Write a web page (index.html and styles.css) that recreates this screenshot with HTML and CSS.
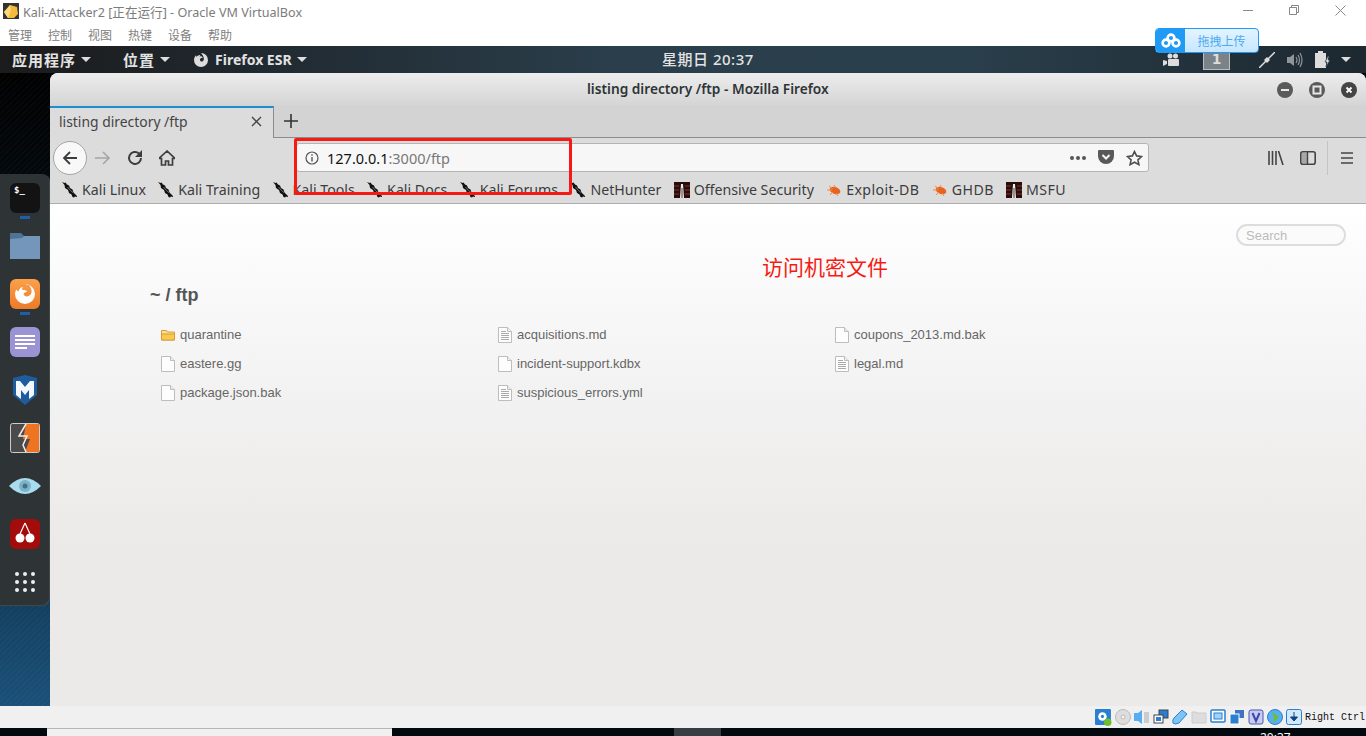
FILE: index.html
```html
<!DOCTYPE html>
<html lang="en">
<head>
  <meta charset="utf-8">
  <title>Kali-Attacker2 - Oracle VM VirtualBox</title>
  <link rel="stylesheet" href="styles.css">
</head>
<body>
<svg class="defs" width="0" height="0">
  <symbol id="dragon" viewBox="0 0 16 16">
    <path d="M0 0l2.500 1 1-.5 1.500 2 2 1 1 2.500 2.500 1.500 1 3 3.500 3.500v1l-2-.5-1 1-1.500-.5-1-2.500-2.500-1.500-1-3-3-2-.5-3z" fill="#111"/>
    <path d="M5.500 5l3 3.500 2.500 2" stroke="#8a8a8a" stroke-width=".8" fill="none"/>
  </symbol>
  <symbol id="offsec" viewBox="0 0 16 16">
    <rect width="16" height="16" fill="#2a0d0a"/>
    <path d="M0 4h5M0 8h5M0 12h5M11 4h5M11 8h5M11 12h5" stroke="#7a3a2a"/>
    <path d="M7 2h2l1 14H6z" fill="#eee"/>
    <path d="M7.600 6h.8v10h-.8z" fill="#2a0d0a"/>
  </symbol>
  <symbol id="bug" viewBox="0 0 16 16">
    <ellipse cx="9" cy="8.500" rx="5.500" ry="3.400" fill="#e8641e" transform="rotate(20 9 8.500)"/>
    <path d="M1 8h5M3 4l4 3M4 13l3-3M8 3l2 3M12 14l-2-3" stroke="#f08a4a" stroke-width="1" fill="none"/>
  </symbol>
  <symbol id="file" viewBox="0 0 14 16">
    <path d="M.5.5h9l4 4v11H.5z" fill="#fdfdfd" stroke="#bdbdbd"/>
    <path d="M9.500.5v4h4" fill="#eee" stroke="#bdbdbd"/>
  </symbol>
  <symbol id="textfile" viewBox="0 0 14 16">
    <path d="M.5.5h9l4 4v11H.5z" fill="#fdfdfd" stroke="#bdbdbd"/>
    <path d="M9.500.5v4h4" fill="#eee" stroke="#bdbdbd"/>
    <path d="M3 4.500h5M3 6.500h8M3 8.500h8M3 10.500h8M3 12.500h8" stroke="#aaa"/>
  </symbol>
</svg>

<div class="vbox">
  <header class="vbox-title">
    <svg class="vbox-logo" width="16" height="16" viewBox="0 0 16 16">
      <rect width="16" height="16" fill="#333"/>
      <path d="M1 9l6-7 7 2 1 7-4 4H5z" fill="#f5b93c"/>
      <path d="M1 9l6-7 1 6-3 7z" fill="#fbd777"/>
    </svg>
    <span class="vbox-title-text">Kali-Attacker2 [正在运行] - Oracle VM VirtualBox</span>
    <div class="win-buttons">
      <svg width="10" height="10" viewBox="0 0 10 10"><path d="M0 5.500h10" stroke="#888"/></svg>
      <svg width="10" height="10" viewBox="0 0 10 10"><path d="M.5 2.500h7v7h-7zM2.500 2.500v-2h7v7h-2" stroke="#888" fill="none"/></svg>
      <svg width="11" height="11" viewBox="0 0 11 11"><path d="M.5.5l10 10M10.500.5l-10 10" stroke="#888" fill="none"/></svg>
    </div>
  </header>
  <nav class="vbox-menu">
    <span>管理</span><span>控制</span><span>视图</span><span>热键</span><span>设备</span><span>帮助</span>
  </nav>

  <main class="guest">
    <div class="panel">
      <div class="panel-left">
        <span class="panel-item cjk">应用程序<i class="caret"></i></span>
        <span class="panel-item cjk">位置<i class="caret"></i></span>
        <span class="panel-item panel-ff">
          <svg width="16" height="16" viewBox="0 0 16 16"><path d="M8 1a7 7 0 1 1-7 7c0-2 .8-3.500 2-4.800L3.500 5C4.500 3.500 6 3 7.500 3L6 4.500c2-.5 3.500 0 4 1.500-1.500-.5-3 .5-3 2s2 2 3 1c1-1 1-2.500 .5-4C10 3 8 1.500 8 1z" fill="#ddd"/></svg>
          Firefox ESR<i class="caret"></i>
        </span>
      </div>
      <div class="panel-clock">星期日 20:37</div>
      <div class="panel-right">
        <svg class="tray-camera" width="16" height="14" viewBox="0 0 16 14"><circle cx="7" cy="3" r="2.500" fill="#ddd"/><circle cx="12.500" cy="3" r="2.500" fill="#ddd"/><rect x="5" y="6" width="11" height="7" rx="1" fill="#ddd"/><path d="M0 7l4 1v3l-4 2z" fill="#ddd"/></svg>
        <span class="workspace">1</span>
        <svg class="tray-plug" width="16" height="16" viewBox="0 0 16 16"><path d="M16 0L9 7M7 9l-7 7" stroke="#ddd" stroke-width="1.500"/><path d="M5 8l3-3 3 3-3 3z" fill="#ddd"/></svg>
        <svg class="tray-vol" width="16" height="16" viewBox="0 0 16 16"><path d="M0 5h3l4-3v12l-4-3H0z" fill="#8f9599"/><path d="M9 5q2 3 0 6M11 3q3 5 0 10M13 1q4 7 0 14" stroke="#8f9599" stroke-width="1.200" fill="none"/></svg>
        <svg class="tray-batt" width="16" height="17" viewBox="0 0 16 17"><path d="M3 0h5v2h3v15H0V2h3z" fill="#ddd"/><path d="M13 5l-3 6h2l-1 5 4-7h-2l1-4z" fill="#ddd" stroke="#24343f" stroke-width=".7"/></svg>
        <i class="caret tray-caret"></i>
      </div>
    </div>

    <div class="desktop"></div>

    <aside class="dock">
      <div class="dock-item">
        <div class="app-terminal">$_</div>
        <i class="running"></i>
      </div>
      <div class="dock-item">
        <svg width="30" height="26" viewBox="0 0 30 26"><path d="M0 0h11l3 3h16v23H0z" fill="#4e7397"/><path d="M0 6l12-1 2-2h16v23H0z" fill="#7496ba"/></svg>
      </div>
      <div class="dock-item">
        <div class="app-firefox">
          <svg width="26" height="26" viewBox="0 0 26 26"><path d="M13 3a10 10 0 1 1-10 10c0-2 .7-3.500 1.500-4.500.5 1 1 1.500 2 2C7 8 9 6 11 6c-1 1-1 2-.5 3 2 0 4 0 4.500 2-2 0-4 1-3 3 1 2 5 2 7-1 1.500-3 0-7-3-10z" fill="#fff"/></svg>
        </div>
        <i class="running"></i>
      </div>
      <div class="dock-item">
        <div class="app-notes"><i></i><i></i><i></i><i class="short"></i></div>
      </div>
      <div class="dock-item">
        <svg width="24" height="30" viewBox="0 0 24 30"><path d="M0 3l12-3 12 3v17l-12 10-12-10z" fill="#1d5c9f"/><path d="M3 20V6h4l5 6 5-6h4v14l-5 4v-9l-4 5-4-5v9z" fill="#f4f8fc"/></svg>
      </div>
      <div class="dock-item">
        <svg width="30" height="30" viewBox="0 0 30 30"><rect x=".5" y=".5" width="29" height="29" rx="2" fill="#4a4a4a" stroke="#ccc"/><path d="M16 1h13v28H15l5-13h-7z" fill="#ef7422"/><path d="M16 1l-7 12h8l-4 9 3 7" fill="none" stroke="#eee" stroke-width="1.500"/></svg>
      </div>
      <div class="dock-item">
        <svg width="32" height="16" viewBox="0 0 32 16"><path d="M0 8q16-16 32 0-16 16-32 0z" fill="#a9dcee"/><circle cx="16" cy="8" r="6" fill="#7db3c9"/><circle cx="16" cy="8" r="2.500" fill="#4c6f82"/></svg>
      </div>
      <div class="dock-item">
        <div class="app-cherry">
          <svg width="24" height="24" viewBox="0 0 24 24"><path d="M12 1L7 12M12 1l5 11" stroke="#fff" stroke-width="1.200" fill="none"/><circle cx="7" cy="16" r="4.500" fill="#fff"/><circle cx="17" cy="16" r="4.500" fill="#fff"/></svg>
        </div>
      </div>
      <div class="dock-item">
        <div class="app-grid"><i></i><i></i><i></i><i></i><i></i><i></i><i></i><i></i><i></i></div>
      </div>
    </aside>

    <section class="firefox">
      <div class="ff-title">
        <span class="ff-title-text">listing directory /ftp - Mozilla Firefox</span>
        <div class="ff-buttons">
          <span class="ff-btn"><svg width="16" height="16" viewBox="0 0 16 16"><circle cx="8" cy="8" r="8" fill="#5a5a5a"/><path d="M4 8h8" stroke="#e8e8e8" stroke-width="2"/></svg></span>
          <span class="ff-btn"><svg width="16" height="16" viewBox="0 0 16 16"><circle cx="8" cy="8" r="8" fill="#5a5a5a"/><rect x="4.500" y="4.500" width="7" height="7" fill="none" stroke="#e8e8e8" stroke-width="2"/></svg></span>
          <span class="ff-btn"><svg width="16" height="16" viewBox="0 0 16 16"><circle cx="8" cy="8" r="8" fill="#444"/><path d="M5.500 5.500l5 5M10.500 5.500l-5 5" stroke="#fff" stroke-width="1.800"/></svg></span>
        </div>
      </div>
      <div class="ff-tabs">
        <div class="tab">
          <span>listing directory /ftp</span>
          <svg width="11" height="11" viewBox="0 0 11 11"><path d="M1 1l9 9M10 1l-9 9" stroke="#444" stroke-width="1.400"/></svg>
        </div>
        <svg class="newtab" width="14" height="14" viewBox="0 0 14 14"><path d="M7 0v14M0 7h14" stroke="#333" stroke-width="1.600"/></svg>
      </div>
      <div class="ff-toolbar">
        <div class="nav-buttons">
          <span class="back"><svg width="16" height="16" viewBox="0 0 16 16"><path d="M15 8H2M8 2L2 8l6 6" stroke="#3d3d3d" stroke-width="1.800" fill="none"/></svg></span>
          <svg class="forward" width="16" height="16" viewBox="0 0 16 16"><path d="M0 8h14M8 2l6 6-6 6" stroke="#a4a4a4" stroke-width="1.500" fill="none"/></svg>
          <svg class="reload" width="16" height="16" viewBox="0 0 16 16"><path d="M14 8a6 6 0 1 1-2-4.500" stroke="#3d3d3d" stroke-width="2" fill="none"/><path d="M15 0v7H8z" fill="#3d3d3d"/></svg>
          <svg class="home" width="16" height="16" viewBox="0 0 16 16"><path d="M8 1L0 8.500h2.500V15h4v-4h3v4h4V8.500H16z" fill="none" stroke="#3d3d3d" stroke-width="1.700"/></svg>
        </div>
        <div class="urlbar">
          <svg width="14" height="14" viewBox="0 0 14 14"><circle cx="7" cy="7" r="6" fill="none" stroke="#555" stroke-width="1.200"/><path d="M7 6v4.500M7 3.200v1.500" stroke="#555" stroke-width="1.400"/></svg>
          <span class="url"><b>127.0.0.1</b>:3000/ftp</span>
          <span class="url-dots"><i></i><i></i><i></i></span>
          <svg width="16" height="15" viewBox="0 0 16 15"><path d="M1 0h14a1 1 0 0 1 1 1v5a8 8 0 0 1-16 0V1a1 1 0 0 1 1-1z" fill="#595959"/><path d="M4.500 5L8 8.500 11.500 5" stroke="#f6f6f6" stroke-width="2" fill="none"/></svg>
          <svg width="17" height="16" viewBox="0 0 17 16"><path d="M8.500 1.500l2.100 4.400 4.900.6-3.600 3.300 1 4.800-4.400-2.400-4.400 2.400 1-4.800-3.600-3.300 4.900-.6z" fill="none" stroke="#4f4f4f" stroke-width="1.600"/></svg>
        </div>
        <div class="ff-tools">
          <svg width="16" height="14" viewBox="0 0 16 14"><path d="M1 0v14M4.500 0v14M8 0v14M10.500 0l4.500 14" stroke="#444" stroke-width="1.600"/></svg>
          <svg width="16" height="14" viewBox="0 0 16 14"><rect x=".8" y=".8" width="14.400" height="12.400" rx="2" fill="none" stroke="#444" stroke-width="1.600"/><path d="M2 2h5v10H2z" fill="#444" opacity=".35"/><path d="M7.500 1v12" stroke="#444" stroke-width="1.400"/></svg>
          <i class="tools-sep"></i>
          <svg width="12" height="12" viewBox="0 0 12 12"><path d="M0 1h12M0 6h12M0 11h12" stroke="#444" stroke-width="1.700"/></svg>
        </div>
      </div>
      <div class="ff-bookmarks">
        <span class="bm"><svg><use href="#dragon"/></svg>Kali Linux</span>
        <span class="bm"><svg><use href="#dragon"/></svg>Kali Training</span>
        <span class="bm"><svg><use href="#dragon"/></svg>Kali Tools</span>
        <span class="bm"><svg><use href="#dragon"/></svg>Kali Docs</span>
        <span class="bm"><svg><use href="#dragon"/></svg>Kali Forums</span>
        <span class="bm"><svg><use href="#dragon"/></svg>NetHunter</span>
        <span class="bm"><svg><use href="#offsec"/></svg>Offensive Security</span>
        <span class="bm bm-caps"><svg><use href="#bug"/></svg>Exploit-DB</span>
        <span class="bm bm-caps"><svg><use href="#bug"/></svg>GHDB</span>
        <span class="bm bm-caps"><svg><use href="#offsec"/></svg>MSFU</span>
      </div>
      <div class="page">
        <div class="search-row"><input class="search" type="text" placeholder="Search"></div>
        <h1 class="crumbs">~ / ftp</h1>
        <ul class="listing">
          <li>
            <svg class="ico" viewBox="0 0 14 16"><path d="M.5 3.500h5l1 1.500h7v8H.5z" fill="#fbe08a" stroke="#d89a3a"/><path d="M.5 7h13v6H.5z" fill="#f9c94e" stroke="#d89a3a"/></svg>
            quarantine
          </li>
          <li><svg class="ico"><use href="#textfile"/></svg>acquisitions.md</li>
          <li><svg class="ico"><use href="#file"/></svg>coupons_2013.md.bak</li>
          <li><svg class="ico"><use href="#file"/></svg>eastere.gg</li>
          <li><svg class="ico"><use href="#file"/></svg>incident-support.kdbx</li>
          <li><svg class="ico"><use href="#textfile"/></svg>legal.md</li>
          <li><svg class="ico"><use href="#file"/></svg>package.json.bak</li>
          <li><svg class="ico"><use href="#textfile"/></svg>suspicious_errors.yml</li>
        </ul>
      </div>
    </section>

    <!-- annotations drawn on top of the screenshot -->
    <div class="mark-box"></div>
    <div class="mark-note">访问机密文件</div>
  </main>

  <footer class="vbox-status">
    <svg width="17" height="17" viewBox="0 0 16 16"><rect width="15" height="15" rx="1" fill="#2a7fd0"/><circle cx="7" cy="7" r="4" fill="#fff"/><circle cx="7" cy="7" r="1.500" fill="#2a7fd0"/><circle cx="12" cy="12.500" r="3.500" fill="#6cc02c"/></svg>
    <svg width="16" height="16" viewBox="0 0 16 16"><circle cx="8" cy="8" r="7.500" fill="#ddd" stroke="#bbb"/><circle cx="8" cy="8" r="2" fill="#f4f4f4" stroke="#bbb"/></svg>
    <svg width="16" height="16" viewBox="0 0 16 16"><path d="M0 4h4l4-3v14l-4-3H0z" fill="#58aef0"/><path d="M10 3h5v11h-5z" fill="#ccc"/></svg>
    <svg width="16" height="16" viewBox="0 0 16 16"><rect x="6" y="1" width="9" height="8" fill="#2a7fd0" stroke="#444"/><rect x="1" y="6" width="9" height="8" fill="#fff" stroke="#444"/><rect x="3" y="8" width="5" height="4" fill="#2a7fd0"/></svg>
    <svg width="16" height="16" viewBox="0 0 16 16"><path d="M10 1l5 4-8 9q-4 2-6 0-1-3 1-5z" fill="#7cc4f4" stroke="#2a7fd0"/></svg>
    <svg width="16" height="16" viewBox="0 0 16 16"><path d="M1 3h4l1 1h9v10H1z" fill="#ddd" stroke="#ccc"/></svg>
    <svg width="16" height="16" viewBox="0 0 16 16"><rect x="1" y="1" width="14" height="12" rx="1" fill="#fff" stroke="#2a7fd0" stroke-width="1.500"/><rect x="4" y="4" width="8" height="6" fill="#9fd4f8" stroke="#2a7fd0"/></svg>
    <svg width="16" height="16" viewBox="0 0 16 16"><rect x="6" y="1" width="9" height="8" fill="#3d74c4"/><rect x="1" y="5" width="9" height="10" fill="#2a7fd0" stroke="#fff"/></svg>
    <svg width="16" height="16" viewBox="0 0 16 16"><rect x="1" y="1" width="14" height="14" rx="2" fill="#c8cdf0" stroke="#4a55b0"/><path d="M4.500 4L8 12l3.500-8" fill="none" stroke="#3a46a8" stroke-width="2"/></svg>
    <svg width="16" height="16" viewBox="0 0 16 16"><circle cx="8" cy="8" r="7.500" fill="#58aef0" stroke="#2a7fd0"/><path d="M5 3l7 5-6 6 1-5z" fill="#6cc02c"/></svg>
    <svg width="16" height="16" viewBox="0 0 16 16"><rect x=".5" y=".5" width="15" height="15" rx="2" fill="#cfe8fb" stroke="#2a7fd0"/><path d="M8 3v6M4.500 8L8 12l3.500-4z" stroke="#123f86" fill="#123f86"/></svg>
    <span class="host-key">Right Ctrl</span>
  </footer>
  <div class="host-taskbar">
    <div class="task-window"></div>
    <div class="task-gray"></div>
    <span class="task-clock">20:37</span>
  </div>
</div>

<div class="upload">
  <span class="upload-icon">
    <svg width="20" height="15" viewBox="0 0 20 15"><g fill="none" stroke="#fff" stroke-width="2.600"><circle cx="10" cy="5" r="3.400"/><circle cx="5" cy="10" r="3.400"/><circle cx="15" cy="10" r="3.400"/></g></svg>
  </span>
  <span class="upload-text">拖拽上传</span>
</div>
</body>
</html>
```

FILE: styles.css
```css
html, body { margin: 0; padding: 0; }
body { width: 1366px; height: 736px; overflow: hidden; position: relative; background: #fff; font-family: "Noto Sans", "Noto Sans CJK SC", sans-serif; }
ul { margin: 0; padding: 0; list-style: none; }
.defs { position: absolute; }

.vbox { width: 1366px; height: 736px; display: flex; flex-direction: column; }

/* host window chrome */
.vbox-title { height: 22px; display: flex; align-items: center; padding-left: 3px; }
.vbox-logo { margin-right: 4px; }
.vbox-title-text { font-size: 12.600px; color: #7c7c7c; }
.win-buttons { margin-left: auto; display: flex; align-items: center; gap: 36px; padding: 0 20px 2px 0; height: 20px; }
.vbox-menu { height: 24px; display: flex; align-items: center; gap: 16px; padding-left: 8px; font-size: 12px; color: #808080; font-family: "Noto Sans CJK SC", sans-serif; }
.vbox-menu span { width: 24px; }

.guest { height: 660px; position: relative; display: flex; flex-direction: column; overflow: hidden; }

/* gnome top bar */
.panel { height: 27px; display: flex; align-items: center; position: relative; color: #e3e3e3; font-weight: 700; font-size: 14px; background: linear-gradient(90deg, #1b1b1b 0, #1f262c 15%, #2a3e4b 45%, #2a3f4c 70%, #1d2830 100%); }
.panel-left { display: flex; align-items: center; gap: 32px; padding-left: 12px; }
.panel-item { display: flex; align-items: center; gap: 5px; white-space: nowrap; }
.panel-item.cjk { font-size: 15px; letter-spacing: 1px; }
.panel-ff { margin-left: -9px; }
.panel-ff svg { margin-right: 1px; }
.caret { display: inline-block; width: 0; height: 0; border: 5px solid transparent; border-top: 5px solid #ddd; border-bottom: 0; }
.panel-clock { position: absolute; left: 662px; top: 3px; line-height: 20px; white-space: nowrap; font-weight: 500; font-size: 15px; letter-spacing: .5px; }
.panel-right { margin-left: auto; display: flex; align-items: center; padding-right: 15px; }
.workspace { width: 27px; height: 21px; box-sizing: border-box; margin: 0 29px 0 24px; background: #7b8288; border: 1px solid #b9bec2; color: #ddd; text-align: center; line-height: 19px; font-size: 14px; font-family: "DejaVu Sans", sans-serif; }
.tray-vol { margin-left: 12px; }
.tray-batt { margin-left: 12px; }
.tray-caret { margin-left: 10px; }

.desktop { flex: 1; background: repeating-linear-gradient(135deg, rgba(255,255,255,.02) 0 2px, transparent 2px 4px), linear-gradient(180deg, #000 0, #02080c 16%, #0d2c42 70%, #144466 88%, #1a5078 100%); }

.dock { position: absolute; left: 0; top: 128px; width: 50px; height: 432px; background: #2e3436; box-shadow: inset -1px -1px 0 #41474a; border-radius: 0 8px 8px 0; display: flex; flex-direction: column; }
.dock-item { height: 48px; flex: none; position: relative; display: flex; align-items: center; justify-content: center; }
.running { position: absolute; left: 20px; top: 42px; width: 10px; height: 3px; background: #1f5fa8; }
.app-terminal { width: 30px; height: 30px; border-radius: 6px; background: #131313; color: #fff; font: 700 9px/14px "DejaVu Sans Mono", monospace; text-indent: 4px; box-sizing: border-box; }
.app-firefox { width: 30px; height: 30px; border-radius: 6px; background: linear-gradient(#fba04a, #ee7a28); display: flex; align-items: center; justify-content: center; }
.app-notes { width: 30px; height: 30px; box-sizing: border-box; border-radius: 6px; background: #9a94d4; padding: 8px 5px 0; display: flex; flex-direction: column; gap: 2px; }
.app-notes i { height: 2px; background: #fff; }
.app-notes .short { width: 12px; }
.app-cherry { width: 30px; height: 30px; border-radius: 6px; background: #a40b0b; display: flex; align-items: center; justify-content: center; }
.app-grid { display: grid; grid-template-columns: repeat(3, 4px); gap: 4px; }
.app-grid i { width: 4px; height: 4px; border-radius: 50%; background: #eee; }

/* firefox window */
.firefox { position: absolute; left: 50px; top: 27px; width: 1316px; height: 633px; border-radius: 8px 8px 0 0; overflow: hidden; display: flex; flex-direction: column; background: #ebeae8; }
.ff-title { height: 32px; flex: none; position: relative; background: linear-gradient(#ededed, #d5d5d5); }
.ff-title-text { position: absolute; left: 537px; top: 6px; font-size: 13.700px; font-weight: 600; color: #2e3436; white-space: nowrap; line-height: 20px; }
.ff-buttons { position: absolute; right: 9px; top: 8px; display: flex; gap: 16px; }
.ff-btn { display: block; width: 16px; height: 16px; }
.ff-tabs { height: 32px; flex: none; display: flex; align-items: center; background: #d3d3d3; border-bottom: 1px solid #8c8c8c; }
.tab { width: 224px; height: 32px; box-sizing: border-box; background: #dcdcdc; border-top: 2px solid #1a90d0; border-right: 1px solid #8c8c8c; display: flex; align-items: center; justify-content: space-between; padding: 0 11px 3px 9px; font-size: 13.900px; color: #444; margin-bottom: -1px; }
.newtab { margin-left: 10px; }
.ff-toolbar { height: 39px; flex: none; display: flex; align-items: center; background: #dcdcdc; }
.nav-buttons { width: 246px; display: flex; align-items: center; flex: none; }
.back { width: 34px; height: 34px; box-sizing: border-box; margin-left: 3px; border-radius: 50%; background: #f8f8f8; border: 1px solid #a4a4a4; display: flex; align-items: center; justify-content: center; }
.forward { margin-left: 8px; }
.reload { margin-left: 16px; }
.home { margin-left: 16px; }
.urlbar { width: 853px; height: 29px; box-sizing: border-box; flex: none; background: #f7f7f7; border: 1px solid #b4b4b4; border-radius: 3px; display: flex; align-items: center; padding: 0 5px 0 8px; gap: 12px; }
.url { font-size: 14.500px; color: #777; flex: 1; margin-left: -4px; }
.url b { color: #111; font-weight: 400; }
.url-dots { display: flex; gap: 2px; }
.url-dots i { width: 4px; height: 4px; background: #555; border-radius: 50%; }
.ff-tools { display: flex; align-items: center; margin-left: 119px; }
.ff-tools svg:nth-child(2) { margin-left: 16px; }
.tools-sep { width: 1px; height: 34px; background: #c4c4c4; margin: 0 13px 0 11px; }
.ff-bookmarks { height: 27px; flex: none; box-sizing: border-box; display: flex; align-items: center; gap: 12.300px; padding: 0 0 1px 12px; background: #dcdcdc; border-bottom: 1px solid #adadad; font-size: 14.200px; color: #3c3c3c; }
.bm { display: flex; align-items: center; white-space: nowrap; }
.bm svg { width: 16px; height: 16px; margin-right: 4px; flex: none; }
.bm-caps { letter-spacing: .4px; }

/* directory listing page */
.page { flex: 1; padding: 0 20px 0 100px; background: linear-gradient(#fff 0, #f3f2f2 190px, #ebeae8 340px); font-family: "Liberation Sans", Arial, sans-serif; }
.search-row { display: flex; justify-content: flex-end; padding-top: 20px; height: 22px; }
.search { width: 110px; height: 22px; box-sizing: border-box; border: 2px solid #ddd; border-radius: 11px; padding: 0 8px; font: 13px "Liberation Sans", Arial, sans-serif; background: #fbfbfb; outline: none; }
.search::placeholder { color: #bbb; }
.crumbs { margin: 38px 0 0; font-size: 18px; line-height: 22px; font-weight: 700; color: #555; }
.listing { display: grid; grid-template-columns: repeat(3, 337px); grid-auto-rows: 29px; margin: 14px 0 0 11px; font-size: 13px; color: #666; }
.listing li { display: flex; align-items: center; gap: 5px; }
.ico { width: 14px; height: 16px; flex: none; }

.mark-box { position: absolute; left: 294px; top: 92px; width: 278px; height: 57px; box-sizing: border-box; border: 3px solid #f51a14; border-radius: 2px; }
.mark-note { position: absolute; left: 762px; top: 205px; font-size: 21px; line-height: 30px; color: #f51a14; font-family: "Noto Sans CJK SC", sans-serif; }

.upload { position: absolute; left: 1155px; top: 28px; width: 104px; height: 25px; box-sizing: border-box; border: 1px solid #1f9bf5; border-radius: 4px; display: flex; overflow: hidden; background: linear-gradient(#e4f4ff, #c6e7ff); }
.upload-icon { width: 29px; background: #1f9bf5; display: flex; align-items: center; justify-content: center; }
.upload-text { flex: 1; text-align: center; color: #4eaaf0; font: 12px/23px "Noto Sans CJK SC", sans-serif; }

/* host status bar and task bar */
.vbox-status { height: 22px; background: #f0f0f0; display: flex; align-items: center; justify-content: flex-end; gap: 3px; padding-right: 1px; }
.host-key { font: 10px "Liberation Mono", monospace; color: #111; }
.host-taskbar { height: 8px; background: #020a10; position: relative; overflow: hidden; }
.task-window { position: absolute; left: 47px; top: 0; width: 345px; height: 8px; background: #f0f0f0; border-top: 1px solid #b5b5b5; box-sizing: border-box; }
.task-gray { position: absolute; left: 674px; top: 0; width: 47px; height: 8px; background: #383d43; }
.task-clock { position: absolute; left: 1260px; top: 3px; font: 12px/14px "Noto Sans", sans-serif; color: #fff; }
```
